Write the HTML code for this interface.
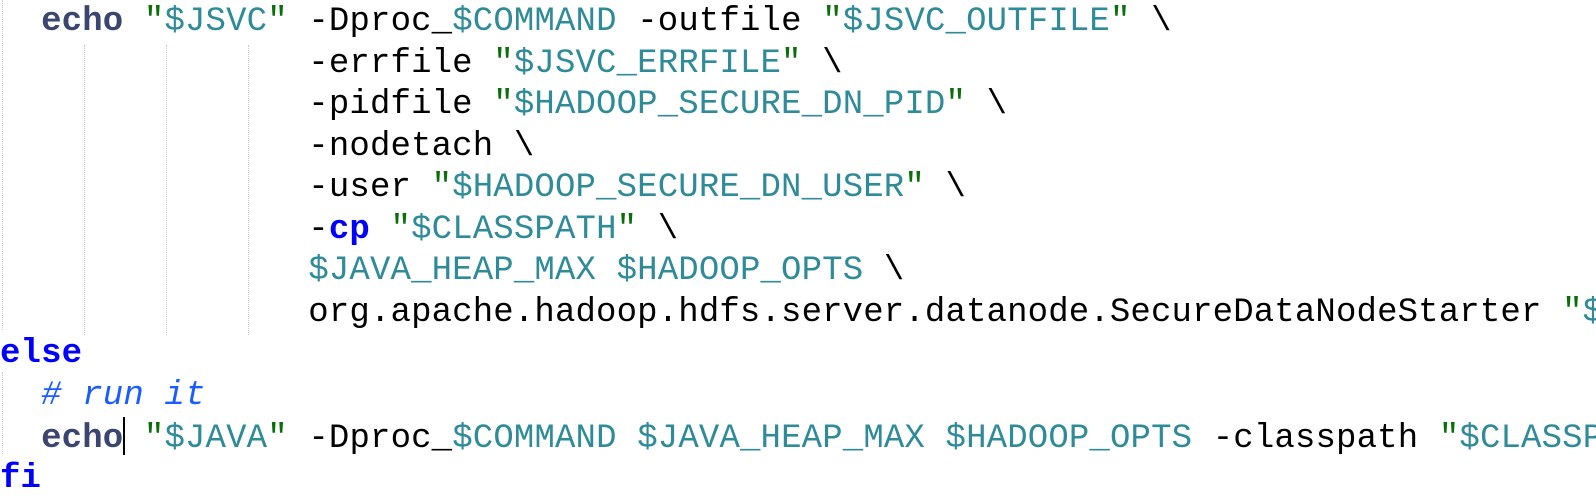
<!DOCTYPE html>
<html><head><style>
html,body{margin:0;padding:0;background:#fff;width:1596px;height:500px;overflow:hidden}
.l{position:absolute;left:0;height:41px;font-family:"Liberation Mono",monospace;font-size:34px;letter-spacing:0.15px;line-height:41px;white-space:pre;color:#000}
.k{color:#0000ff;font-weight:bold}
.e{color:#3b4670;font-weight:bold}
.q{color:#0a6e0a}
.v{color:#2f8b98}
.c{color:#1a5cff;font-style:italic}
.g{position:absolute;width:0;border-left:1px dotted #c8c8c8}
.cur{display:inline-block;width:2px;height:38px;background:#000;vertical-align:-8px;margin-right:-2px}
</style></head><body>
<div class="g" style="left:2px;top:0;height:330px"></div>
<div class="g" style="left:84px;top:45px;height:290px"></div>
<div class="g" style="left:166px;top:45px;height:290px"></div>
<div class="g" style="left:248px;top:45px;height:290px"></div>
<div class="g" style="left:2px;top:372px;height:82px"></div>
<div class="l" style="top:2px">  <span class="e">echo</span> <span class="q">"</span><span class="v">$JSVC</span><span class="q">"</span> -Dproc_<span class="v">$COMMAND</span> -outfile <span class="q">"</span><span class="v">$JSVC_OUTFILE</span><span class="q">"</span> \</div>
<div class="l" style="top:44px">               -errfile <span class="q">"</span><span class="v">$JSVC_ERRFILE</span><span class="q">"</span> \</div>
<div class="l" style="top:85px">               -pidfile <span class="q">"</span><span class="v">$HADOOP_SECURE_DN_PID</span><span class="q">"</span> \</div>
<div class="l" style="top:127px">               -nodetach \</div>
<div class="l" style="top:168px">               -user <span class="q">"</span><span class="v">$HADOOP_SECURE_DN_USER</span><span class="q">"</span> \</div>
<div class="l" style="top:210px">               -<span class="k">cp</span> <span class="q">"</span><span class="v">$CLASSPATH</span><span class="q">"</span> \</div>
<div class="l" style="top:251px">               <span class="v">$JAVA_HEAP_MAX</span> <span class="v">$HADOOP_OPTS</span> \</div>
<div class="l" style="top:293px">               org.apache.hadoop.hdfs.server.datanode.SecureDataNodeStarter <span class="q">"</span><span class="v">$@</span><span class="q">"</span></div>
<div class="l" style="top:334px"><span class="k">else</span></div>
<div class="l" style="top:376px">  <span class="c"># run it</span></div>
<div class="l" style="top:417px">  <span class="e">echo</span><span class="cur"></span> <span class="q">"</span><span class="v">$JAVA</span><span class="q">"</span> -Dproc_<span class="v">$COMMAND</span> <span class="v">$JAVA_HEAP_MAX</span> <span class="v">$HADOOP_OPTS</span> -classpath <span class="q">"</span><span class="v">$CLASSPATH</span><span class="q">"</span></div>
<div class="l" style="top:459px"><span class="k">fi</span></div>
</body></html>
